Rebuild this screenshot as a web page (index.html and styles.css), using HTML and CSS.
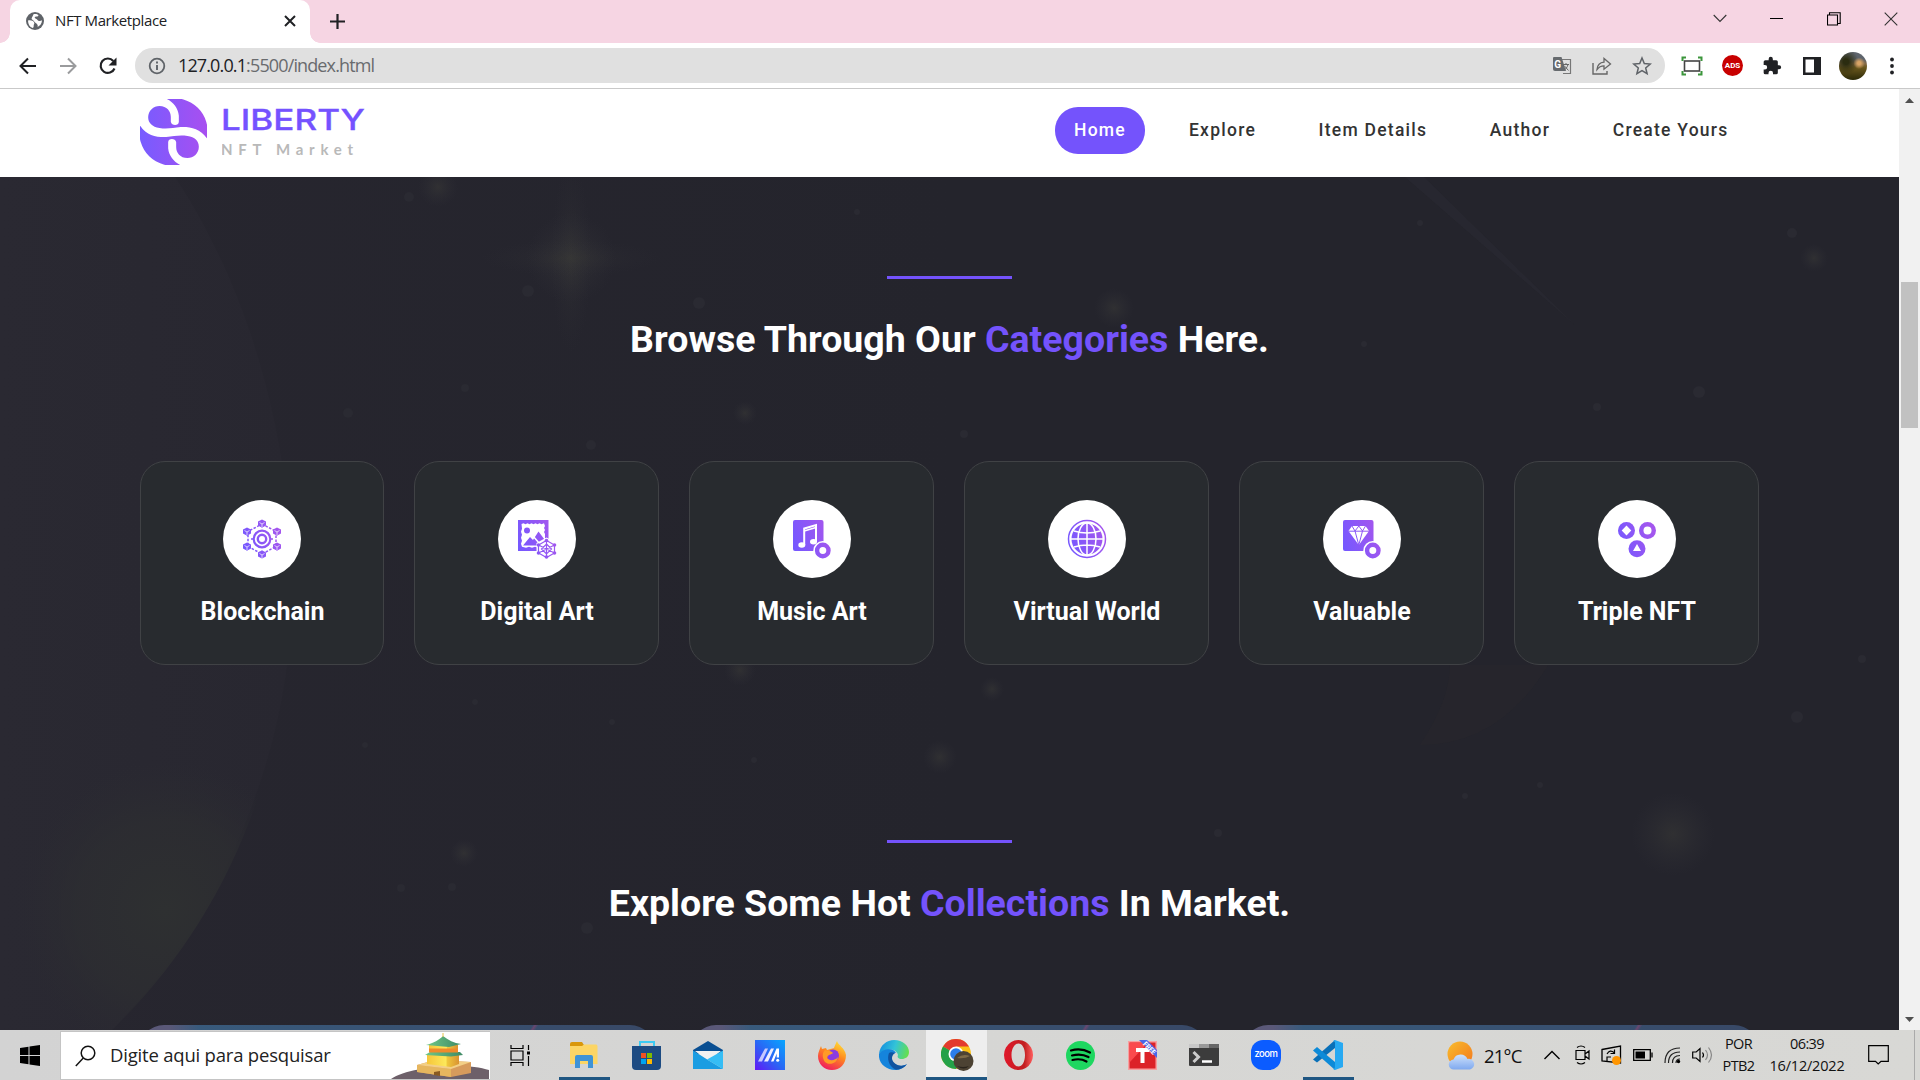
FILE: index.html
```html
<!DOCTYPE html>
<html lang="pt-BR">
<head>
<meta charset="utf-8">
<title>NFT Marketplace</title>
<link rel="stylesheet" href="styles.css">
</head>
<body>
<div class="screen">
  <div class="tabstrip">
    <div class="tab">
      <svg class="favicon" width="18" height="18" viewBox="0 0 18 18"><circle cx="9" cy="9" r="9" fill="#5f6368"/><path d="M2 8.500c3-.5 5 .2 6 1.800 1 1.500-.5 2-.3 3.400.1 1.100-.4 2-1 2.300C3.500 15 2 12 2 8.500zM7.500 2.200c2-.6 4 0 5 .8-.2 1.600-1.700 1.500-3.200 1.800-1 .2-.6 1.700.6 1.900 1.500.2 1.700 2.200 3.400 2.300 1.200 0 2-.7 2.700-.5-.1 3-1.900 5.300-4.400 6.400.6-1.700-.3-3.200-1.900-4-1.700-1-2-2.700-3.600-3.300C5 7 6 5.500 6.500 4.500z" fill="#fff"/></svg>
      <span class="tab-title">NFT Marketplace</span>
      <svg class="tab-close" width="12" height="12" viewBox="0 0 12 12"><path d="M1 1l10 10M11 1L1 11" stroke="#202124" stroke-width="2"/></svg>
    </div>
    <svg class="newtab" width="15" height="15" viewBox="0 0 15 15"><path d="M7.500 0v15M0 7.500h15" stroke="#202124" stroke-width="2.200"/></svg>
    <div class="winbtns">
      <svg width="14" height="9" viewBox="0 0 14 9"><path d="M.7 1L7 7.500 13.300 1" fill="none" stroke="#333" stroke-width="1.100"/></svg>
      <svg width="14" height="9" viewBox="0 0 14 9"><path d="M0 4.500h13" stroke="#000"/></svg>
      <svg width="14" height="14" viewBox="0 0 14 14"><path d="M.5 3h10v10H.5zM2.500 3V.8h10.700v10.700H11" fill="none" stroke="#000" stroke-width="1.100"/></svg>
      <svg width="14" height="14" viewBox="0 0 14 14"><path d="M.7.700l12.600 12.600M13.300.7L.7 13.300" stroke="#333" stroke-width="1.100"/></svg>
    </div>
  </div>

  <div class="toolbar">
    <div class="navbtns">
      <svg width="20" height="20" viewBox="0 0 20 20"><path d="M18 10H3M10 2.500L2.500 10l7.500 7.500" fill="none" stroke="#202124" stroke-width="2"/></svg>
      <svg width="20" height="20" viewBox="0 0 20 20"><path d="M2 10h15M10 2.500l7.500 7.500-7.500 7.500" fill="none" stroke="#9a9b9d" stroke-width="2"/></svg>
      <svg width="20" height="20" viewBox="0 0 20 20"><path d="M16.500 12.500A7.200 7.200 0 1 1 15.300 5" fill="none" stroke="#202124" stroke-width="2.200"/><path d="M18.500 1.500v8h-8z" fill="#202124"/></svg>
    </div>
    <div class="address">
      <svg width="18" height="18" viewBox="0 0 18 18"><circle cx="9" cy="9" r="7.300" fill="none" stroke="#5f6368" stroke-width="1.800"/><path d="M9 8v5M9 4.600v2" stroke="#5f6368" stroke-width="1.900"/></svg>
      <span class="url">127.0.0.1<span class="url-rest">:5500/index.html</span></span>
      <div class="address-icons">
        <svg width="20" height="20" viewBox="0 0 20 20"><path d="M8 3.500h10.500v14H11" fill="none" stroke="#777" stroke-width="1.200"/><path d="M1.500 1h8l4.500 14H3a2 2 0 0 1-2-2V2z" fill="#666a6e"/><text class="translate-g" x="2.200" y="11.500" fill="#fff">G</text><path d="M11 8.500h6M14 7v1.500M16 8.500c-.7 3-2.500 4.500-3.500 5.500M12.500 10l4 4.500" stroke="#666" fill="none"/></svg>
        <svg width="20" height="20" viewBox="0 0 20 20"><path d="M1 7v11h14v-3" fill="none" stroke="#666" stroke-width="1.400"/><path d="M5 13.500c.5-5 3-7 7-7.300V2.500L18.500 8 12 13.200V9.800c-3 0-5 .9-7 3.700z" fill="none" stroke="#666" stroke-width="1.300"/></svg>
        <svg width="20" height="20" viewBox="0 0 20 20"><path d="M10 2l2.300 5.500 6 .5-4.600 3.900 1.400 5.800L10 14.600l-5.100 3.100 1.400-5.800L1.700 8l6-.5z" fill="none" stroke="#5f6368" stroke-width="1.500"/></svg>
      </div>
    </div>
    <div class="exts">
      <svg width="22" height="20" viewBox="0 0 22 20"><path d="M1.500 5V1.500H5M17 1.500h3.500V5M20.500 15v3.500H17M5 18.500H1.500V15" fill="none" stroke="#3c963c" stroke-width="2"/><rect x="3.500" y="5" width="15" height="10" fill="#fff" stroke="#444" stroke-width="1.600"/></svg>
      <span class="ads">ADS</span>
      <svg width="20" height="20" viewBox="0 0 24 24"><path d="M20.500 11H19V7a2 2 0 0 0-2-2h-4V3.500a2.500 2.500 0 0 0-5 0V5H4a2 2 0 0 0-2 2v3.800h1.500a2.700 2.700 0 0 1 0 5.400H2V20a2 2 0 0 0 2 2h3.800v-1.500a2.700 2.700 0 0 1 5.400 0V22H17a2 2 0 0 0 2-2v-4h1.500a2.500 2.500 0 0 0 0-5z" fill="#202124"/></svg>
      <svg width="18" height="18" viewBox="0 0 18 18"><path d="M0 0h18v18H0zM2.500 2.500v13h8.500v-13z" fill="#202124" fill-rule="evenodd"/></svg>
      <span class="avatar"></span>
      <svg width="6" height="18" viewBox="0 0 6 18"><circle cx="3" cy="2.500" r="1.900" fill="#202124"/><circle cx="3" cy="9" r="1.900" fill="#202124"/><circle cx="3" cy="15.500" r="1.900" fill="#202124"/></svg>
    </div>
  </div>

  <div class="viewport">
    <div class="page">
      <header class="header">
        <div class="logo">
          <svg width="67" height="66" viewBox="0 0 200 198">
            <defs>
              <linearGradient id="lg" gradientUnits="userSpaceOnUse" x1="0" y1="0" x2="200" y2="0"><stop offset="0" stop-color="#775cff"/><stop offset="1" stop-color="#a84ff0"/></linearGradient>
              <linearGradient id="lg2" gradientUnits="userSpaceOnUse" x1="200" y1="0" x2="0" y2="0"><stop offset="0" stop-color="#775cff"/><stop offset="1" stop-color="#a84ff0"/></linearGradient>
            </defs>
            <path fill="url(#lg)" d="M80 0A100 99 0 0 1 200 118C180 88 150 83 122 84C98 86 82 91 58 87C36 84 24 72 24 55C24 35 40 21 58 21C80 21 92 36 92 54L92 68C94 81 116 81 116 68L116 50C114 28 100 10 80 0Z"/>
            <path fill="url(#lg2)" transform="rotate(180 100 99)" d="M80 0A100 99 0 0 1 200 118C180 88 150 83 122 84C98 86 82 91 58 87C36 84 24 72 24 55C24 35 40 21 58 21C80 21 92 36 92 54L92 68C94 81 116 81 116 68L116 50C114 28 100 10 80 0Z"/>
          </svg>
          <svg class="wordmark" width="146" height="66" viewBox="0 0 146 66">
            <text class="wm-name" x="-1" y="31" textLength="144" lengthAdjust="spacingAndGlyphs">LIBERTY</text>
            <text class="wm-sub" x="-1" y="56" textLength="132" lengthAdjust="spacing">NFT Market</text>
          </svg>
        </div>
        <nav class="nav">
          <a class="nav-link active">Home</a>
          <a class="nav-link">Explore</a>
          <a class="nav-link">Item Details</a>
          <a class="nav-link">Author</a>
          <a class="nav-link">Create Yours</a>
        </nav>
      </header>

      <main class="main">
        <svg class="space" width="1899" height="853" viewBox="0 177 1899 853" aria-hidden="true">
          <defs>
            <radialGradient id="glow"><stop offset="0" stop-color="#3c3c38" stop-opacity=".5"/><stop offset="1" stop-color="#32323a" stop-opacity="0"/></radialGradient>
            <linearGradient id="planet" x1="0" y1="0" x2="1" y2="0"><stop offset="0" stop-color="#2a2932"/><stop offset="1" stop-color="#282730"/></linearGradient>
            <linearGradient id="halo" x1="0" y1="0" x2="1" y2="0"><stop offset="0" stop-color="#27262f"/><stop offset="1" stop-color="#24242c"/></linearGradient>
            <radialGradient id="moss" gradientUnits="userSpaceOnUse" cx="165" cy="910" r="150"><stop offset="0" stop-color="#2e3031"/><stop offset=".6" stop-color="#2d2e31" stop-opacity=".7"/><stop offset="1" stop-color="#2b2b32" stop-opacity="0"/></radialGradient>
          </defs>
          <rect x="0" y="177" width="950" height="853" fill="url(#halo)"/>
          <path d="M0 177H175C250 290 292 440 292 590C292 760 215 925 112 1030H0Z" fill="url(#planet)"/>
          <path d="M0 650H288C275 810 205 940 112 1030H0Z" fill="url(#moss)"/>
          <path d="M1405 177L1424 177L1575 325Z" fill="#2a2a32" opacity=".7"/>
          <path d="M1548 665Q1500 745 1420 745Q1450 700 1450 665Z" fill="#2a272c" opacity=".45"/>
          <g fill="url(#glow)">
            <ellipse cx="571" cy="258" rx="45" ry="45"/><ellipse cx="571" cy="258" rx="20" ry="95" opacity=".6"/><ellipse cx="571" cy="258" rx="90" ry="18" opacity=".5"/>
            <circle cx="1673" cy="834" r="42"/><circle cx="438" cy="187" r="20"/><circle cx="1114" cy="308" r="20"/><circle cx="940" cy="757" r="17"/><circle cx="1814" cy="258" r="14"/><circle cx="740" cy="670" r="16"/><circle cx="992" cy="689" r="12"/><circle cx="464" cy="853" r="14"/><circle cx="745" cy="413" r="12"/>
          </g>
          <g fill="#2a2a32">
            <circle cx="528" cy="291" r="6"/><circle cx="699" cy="303" r="6"/><circle cx="409" cy="197" r="5"/><circle cx="591" cy="445" r="5"/><circle cx="348" cy="413" r="5"/><circle cx="465" cy="388" r="4"/><circle cx="1699" cy="392" r="6"/><circle cx="1797" cy="717" r="6"/><circle cx="1792" cy="233" r="5"/><circle cx="587" cy="928" r="6"/><circle cx="475" cy="702" r="3"/><circle cx="365" cy="745" r="3"/><circle cx="612" cy="722" r="3"/><circle cx="754" cy="760" r="3"/><circle cx="1465" cy="796" r="3"/><circle cx="1540" cy="785" r="3"/><circle cx="1218" cy="833" r="4"/><circle cx="401" cy="888" r="4"/><circle cx="452" cy="887" r="4"/><circle cx="857" cy="212" r="3"/><circle cx="1364" cy="344" r="3"/><circle cx="1420" cy="223" r="3"/><circle cx="1862" cy="659" r="4"/><circle cx="964" cy="434" r="4"/><circle cx="1597" cy="407" r="4"/>
          </g>
        </svg>

        <section class="section categories">
          <div class="line-dec"></div>
          <h2 class="title">Browse Through Our <em>Categories</em> Here.</h2>
          <div class="cat-grid">
            <article class="cat"><span class="cat-icon">
              <svg width="40" height="40" viewBox="0 0 40 40"><defs><linearGradient id="g" gradientUnits="userSpaceOnUse" x1="0" y1="24" x2="36" y2="12"><stop offset="0" stop-color="#7558ff"/><stop offset="1" stop-color="#a356ee"/></linearGradient></defs>
              <g fill="none" stroke="url(#g)"><circle cx="20" cy="20" r="8.300" stroke-width="2.200"/><circle cx="20" cy="20" r="4.200" stroke-width="2.400"/><path d="M20 5L34 12.500V27.500L20 35L6 27.500V12.500Z" stroke-width="1.500" stroke-dasharray="2.500 1.500"/><path d="M9 20h2M29 20h2" stroke-width="1.500"/></g>
              <g fill="url(#g)"><path d="M20 .5l4 2v4l-4 2.300-4-2.300v-4zM20 31.200l4 2.300v4l-4 2-4-2v-4zM5 8.500l4 2v4l-4 2.300-4-2.300v-4zM35 8.500l4 2v4l-4 2.300-4-2.300v-4zM5 23.500l4 2v4l-4 2.300-4-2.300v-4zM35 23.500l4 2v4l-4 2.300-4-2.300v-4z"/></g>
              <path d="M17.500 3.500L20 5l2.500-1.500M20 5v3M17.500 34.500L20 36l2.500-1.500M20 36v3M2.500 11.500L5 13l2.500-1.500M5 13v3M32.500 11.500L35 13l2.500-1.500M35 13v3M2.500 26.500L5 28l2.500-1.500M5 28v3M32.500 26.500L35 28l2.500-1.500M35 28v3" fill="none" stroke="#fff" stroke-width=".7"/></svg></span><h4>Blockchain</h4></article>
            <article class="cat"><span class="cat-icon">
              <svg width="40" height="40" viewBox="0 0 40 40"><path d="M1 1h30.500v31H1z" fill="url(#g)"/><path d="M4.500 5l2-.8 2 1 2-1 2 1 2-1 2 1 2-1 2 1 2-1 2 1 2.500-1L28 7l-1 2 1 2-1 2 1 2v13l-2 .8-3-1-2 1-3-1-3 1-3-1-3 1-4-1-1-3 1-3-1-3 1-3-1-3 1-3z" fill="#fff"/><circle cx="10" cy="11.500" r="3" fill="url(#g)"/><path d="M6 26.500l7-8.500 3 3 5.500-8.500 6 8-3 6z" fill="url(#g)"/><path d="M16 17l6 7" stroke="#fff" stroke-width="1.500"/><path d="M29.500 18.500l10 5.500v11l-10 5.500-10-5.500V24z" fill="#fff"/><g fill="none" stroke="url(#g)" stroke-width="1.200"><path d="M29.500 21.500l8 4.500v8l-8 4.500-8-4.500v-8zM29.500 25l5 5-5 5-5-5zM29.500 21.500v17M21.500 26l16 8M37.500 26l-16 8"/></g><g fill="url(#g)"><circle cx="29.500" cy="21.500" r="1.800"/><circle cx="29.500" cy="38" r="1.800"/><circle cx="21.500" cy="26" r="1.800"/><circle cx="37.500" cy="26" r="1.800"/><circle cx="21.500" cy="34" r="1.800"/><circle cx="37.500" cy="34" r="1.800"/></g></svg></span><h4>Digital Art</h4></article>
            <article class="cat"><span class="cat-icon">
              <svg width="40" height="40" viewBox="0 0 40 40"><rect x="1" y="1" width="30.500" height="31" rx="2" fill="url(#g)"/><path d="M12.200 26V9.500L24 6v17" fill="none" stroke="#fff" stroke-width="2"/><path d="M12.200 12L24 8.500" stroke="#fff" stroke-width="1.500"/><ellipse cx="9.800" cy="26" rx="3.500" ry="2.800" fill="#fff"/><ellipse cx="21.500" cy="22.800" rx="3.500" ry="2.700" fill="#fff"/><circle cx="30.800" cy="31.500" r="9.500" fill="#fff"/><circle cx="30.800" cy="31.500" r="5.700" fill="none" stroke="url(#g)" stroke-width="4.400"/></svg></span><h4>Music Art</h4></article>
            <article class="cat"><span class="cat-icon">
              <svg width="40" height="40" viewBox="0 0 40 40"><circle cx="20" cy="20" r="18.500" fill="none" stroke="url(#g)" stroke-width="1.500"/><circle cx="20" cy="20" r="15.500" fill="url(#g)"/><g fill="none" stroke="#fff" stroke-width="1.500"><path d="M20 4v32M4 20h32M7 12q13 4 26 0M7 28q13-4 26 0"/><ellipse cx="20" cy="20" rx="9" ry="16"/></g></svg></span><h4>Virtual World</h4></article>
            <article class="cat"><span class="cat-icon">
              <svg width="40" height="40" viewBox="0 0 40 40"><rect x="1" y="1" width="30.500" height="31" rx="2" fill="url(#g)"/><path d="M10 7h13.500l3.500 5-10.200 14L6.500 12z" fill="#fff"/><path d="M6.500 12.200H27M13 12l3.800 14L20.500 12M10 7l3 5 3.800-5 3.700 5 3-5" fill="none" stroke="url(#g)"/><circle cx="30.800" cy="31.500" r="9.500" fill="#fff"/><circle cx="30.800" cy="31.500" r="5.700" fill="none" stroke="url(#g)" stroke-width="4.400"/></svg></span><h4>Valuable</h4></article>
            <article class="cat"><span class="cat-icon">
              <svg width="40" height="40" viewBox="0 0 40 40"><g fill="url(#g)"><circle cx="9.500" cy="11.500" r="8.500"/><circle cx="30.500" cy="11.500" r="8.500"/><circle cx="20" cy="29.800" r="8.500"/></g><path d="M9.500 6.500l4.800 5-4.800 5-4.800-5zM20 25l4 7h-8z" fill="#fff"/><circle cx="30.500" cy="11.500" r="4" fill="#fff"/></svg></span><h4>Triple NFT</h4></article>
          </div>
        </section>

        <section class="section collections">
          <div class="line-dec"></div>
          <h2 class="title">Explore Some Hot <em>Collections</em> In Market.</h2>
          <div class="col-grid"><div class="col-card"></div><div class="col-card"></div><div class="col-card"></div></div>
        </section>
      </main>
    </div>
    <div class="scrollbar">
      <svg width="9" height="5" viewBox="0 0 9 5"><path d="M0 5L4.500 0 9 5z" fill="#505050"/></svg>
      <div class="track"><div class="thumb"></div></div>
      <svg width="9" height="5" viewBox="0 0 9 5"><path d="M0 0l4.500 5L9 0z" fill="#505050"/></svg>
    </div>
  </div>

  <div class="taskbar">
    <div class="start"><svg width="20" height="21" viewBox="0 0 20 21"><path d="M0 3l8.500-1.200V10H0zM9.500 1.600L20 0v10H9.500zM0 11h8.500v8.200L0 18zM9.500 11H20v10L9.500 19.400z"/></svg></div>
    <div class="search">
      <svg width="21" height="22" viewBox="0 0 21 22"><circle cx="13" cy="8" r="6.800" fill="none" stroke="#111" stroke-width="1.500"/><path d="M8.300 13L.8 21" stroke="#111" stroke-width="1.500"/></svg>
      <span class="search-text">Digite aqui para pesquisar</span>
      <svg class="temple" width="98" height="47" viewBox="0 0 98 47">
        <defs><linearGradient id="tg" x1="0" x2="1"><stop offset="0" stop-color="#f6c63a"/><stop offset=".6" stop-color="#fde95b"/><stop offset=".62" stop-color="#f0c93c"/><stop offset="1" stop-color="#d99332"/></linearGradient><linearGradient id="gg" x1="0" x2="1"><stop offset="0" stop-color="#6fc888"/><stop offset="1" stop-color="#3f8a65"/></linearGradient></defs>
        <path d="M0 47C18 34 75 30 98 38V47z" fill="#6d6069"/><path d="M26 33l18-5 36 2v11l-20 4-34-5z" fill="#d79b5c"/><path d="M26 33l34 4v8l-34-5z" fill="#e6b65e"/><path d="M26 33l18-5 36 2-20 7z" fill="#f3cf86"/>
        <path d="M36 23h32v9l-8 3-24-3z" fill="url(#tg)"/><path d="M34 23l5-3h30l3 3-12 1.500z" fill="url(#gg)"/><path d="M38 13h29v7.500H38z" fill="#ef8a2b"/><path d="M38 13h29v3.500H38z" fill="url(#tg)"/><path d="M35 13c8-2 13-5 17-9 5 4 11 7 18 8l-12 3z" fill="url(#gg)"/><path d="M52 1v4" stroke="#e8c34a"/><path d="M43 43v-3l6-1v5z" fill="#8a5a20"/></svg>
    </div>
    <div class="taskview"><svg width="20" height="21" viewBox="0 0 20 21"><path d="M1 0v3.500h12V0M1 21v-3.500h12V21M1 6h12v9H1zM18.500 0v5M18.500 11v10" fill="none" stroke="#000" stroke-width="1.200"/><path d="M17 6.500h3v3h-3z"/></svg></div>
    <div class="apps">
      <div class="app running"><svg width="28" height="26" viewBox="0 0 28 26"><path d="M0 2q0-2 2-2h10l2 3v4H0z" fill="#d9970b"/><path d="M0 4h12l2-1.500h12q1.500 0 1.500 2V22H0z" fill="#fcd565"/><path d="M5 26V15q0-2 2-2h14q2 0 2 2v11h-5v-7h-8v7z" fill="#3f93d6"/></svg></div>
      <div class="app"><svg width="29" height="29" viewBox="0 0 29 29"><path d="M8 8V1h14v7" fill="none" stroke="#3ccbf4" stroke-width="2"/><path d="M0 5h29v20q0 4-4 4H4q-4 0-4-4z" fill="#1d4b82"/><path d="M9 12h5v5H9z" fill="#f25022"/><path d="M15 12h5v5h-5z" fill="#7fba00"/><path d="M9 18h5v5H9z" fill="#00a4ef"/><path d="M15 18h5v5h-5z" fill="#ffb900"/></svg></div>
      <div class="app"><svg width="30" height="28" viewBox="0 0 30 28"><path d="M0 9L15 0l15 9v4H0z" fill="#0a4f92"/><path d="M2 10h26L15 20z" fill="#f1f1f1"/><path d="M0 9.500l15 9.500 15 9H0z" fill="#1b9de2"/><path d="M30 9.500L14 18.500 30 28z" fill="#35bdf5"/></svg></div>
      <div class="app"><svg width="30" height="30" viewBox="0 0 30 30"><defs><linearGradient id="ma" x1="0" y1="1" x2="1" y2="0"><stop offset="0" stop-color="#6317f5"/><stop offset=".5" stop-color="#2869f5"/><stop offset="1" stop-color="#06a7ff"/></linearGradient></defs><path d="M0 0h30v30H0z" fill="url(#ma)"/><path d="M3 21.500L10 8.500h3L7 21.500z" fill="#c5c8ff"/><path d="M9 21.500l7-13h3l-6 13z" fill="#eef"/><path d="M16 21.500l5.500-13H24v9h-2.300v-4l-3.200 8z" fill="#fff"/><circle cx="22.700" cy="20.300" r="1.500" fill="#fff"/></svg></div>
      <div class="app"><svg width="28" height="29" viewBox="0 0 28 29"><defs><linearGradient id="ff" x1=".8" y1="0" x2=".3" y2="1"><stop offset="0" stop-color="#ffe33b"/><stop offset=".45" stop-color="#ff8a1e"/><stop offset="1" stop-color="#f0195f"/></linearGradient></defs><path d="M3 5l1 3 4-1 1 2c2-1 5-1 7-2 1-3 2-5 3-7 1 4 8 7 9 14C28 23 22 29 14 29S0 23 0 15C0 11 2 8 3 5z" fill="url(#ff)"/><circle cx="15" cy="14.500" r="6" fill="#8a3be0"/><path d="M7 9c3 1 5 0 8 3-2 2-5 1-6 5 2 3 8 3 11-1-1 6-8 9-13 5-3-4-3-9 0-12z" fill="#ff9a26"/></svg></div>
      <div class="app"><svg width="30" height="30" viewBox="0 0 30 30"><defs><linearGradient id="ed" x1="0" y1=".4" x2="1" y2=".6"><stop offset="0" stop-color="#1490df"/><stop offset=".5" stop-color="#33c3d8"/><stop offset="1" stop-color="#66e04b"/></linearGradient></defs><path d="M0 14C1 5 8 0 15 0c9 0 15 6 15 12 0 5-4 7-7 7-4 0-5-2-4-4-1-4-5-6-9-5-5 0-8 2-10 4z" fill="url(#ed)"/><path d="M0 14c3-5 14-7 17-1-5 0-6 8-1 11 4 3 9 2 12 0-3 4-7 6-12 6C7 30-1 23 0 14z" fill="#1584dc"/><path d="M10 13c-2 5-1 13 7 16.800 5-.3 9-2.800 11-5.800-3 2-8 2.500-12-.5-4-3-4-8 0-10.500-2-1-5-1-6 0z" fill="#1053a0"/></svg></div>
      <div class="app current"><svg width="33" height="33" viewBox="0 0 33 33"><circle cx="15" cy="15" r="15" fill="#fbc116"/><path d="M15 15L2 7.500A15 15 0 0 1 28 7.500H15z" fill="#e33b2e"/><path d="M15 15L2 7.500A15 15 0 0 0 15 30l6.500-11.300z" fill="#24a148"/><circle cx="15" cy="15" r="7.500" fill="#fff"/><circle cx="15" cy="15" r="5.800" fill="#2b7de9"/><circle cx="22.500" cy="22" r="10" fill="#4c4233"/><path d="M16 19q6-5 13-2-5 3-13 2z" fill="#7d6a48"/><path d="M16 27q6 2 12 0-5 5-12 0z" fill="#2a241c"/></svg></div>
      <div class="app"><svg width="29" height="30" viewBox="0 0 29 30"><defs><linearGradient id="op" x1="0" x2="1"><stop offset="0" stop-color="#e0182a"/><stop offset=".7" stop-color="#c11e20"/><stop offset="1" stop-color="#ff6060"/></linearGradient></defs><path d="M14.500 0a14.500 15 0 1 0 .01 0zM14.500 3.500C18 3.500 21 8 21 15s-3 11.500-6.500 11.500S7.500 22 7.500 15 11 3.500 14.500 3.500z" fill="url(#op)" fill-rule="evenodd"/></svg></div>
      <div class="app"><svg width="29" height="29" viewBox="0 0 29 29"><circle cx="14.500" cy="14.500" r="14.500" fill="#1ed760"/><path d="M5 9.500q10-3 19 2M6 14.500q9-2.500 16.500 1.500M6.500 19q8-2 14 1.500" fill="none" stroke="#000" stroke-width="2.200" stroke-linecap="round"/></svg></div>
      <div class="app"><svg width="29" height="30" viewBox="0 0 29 30"><path d="M0 1h29v29H0z" fill="#f7a0a0"/><path d="M1.500 2.500h26v26h-26z" fill="#dc2228"/><path d="M1.500 2.500H20l-18.500 20z" fill="#fa4a4d"/><path d="M8 8h13v4h-4.500v11h-4V12H8z" fill="#fff"/><path d="M11 0h8l10 10v8z" fill="#4a66ea"/><text class="free" transform="translate(14.500 4.500) rotate(45)" textLength="15" lengthAdjust="spacingAndGlyphs">FREE</text></svg></div>
      <div class="app"><svg width="30" height="22" viewBox="0 0 30 22"><rect width="30" height="22" rx="1" fill="#3c3c3c"/><path d="M0 0h10v4H0z" fill="#c8c8c8"/><path d="M10 0h10v4H10z" fill="#999"/><path d="M20 0h10v4H20z" fill="#666"/><path d="M4.500 8l5 5-5 5" fill="none" stroke="#ccc" stroke-width="3"/><path d="M13 17.500h10" stroke="#fff" stroke-width="2.500"/></svg></div>
      <div class="app"><span class="zoom-app">zoom</span></div>
      <div class="app running"><svg width="30" height="30" viewBox="0 0 30 30"><path d="M22 0v8L4 22.500 0 19.500z" fill="#0a70b8"/><path d="M0 10.500L4 7l18 15v8z" fill="#0c8ad8"/><path d="M22 0l8 3v24l-8 3-2-1c1.500 0 2-1 2-2V3c0-1-.5-2-2-2z" fill="#27a9f2"/></svg></div>
    </div>
    <div class="tray">
      <svg class="weather" width="28" height="29" viewBox="0 0 28 29"><defs><linearGradient id="sun" x1="0" y1="0" x2="1" y2="1"><stop offset="0" stop-color="#f9bd2c"/><stop offset="1" stop-color="#f3761d"/></linearGradient><linearGradient id="cl" x1="0" y1="0" x2="0" y2="1"><stop offset="0" stop-color="#cfe2fc"/><stop offset="1" stop-color="#7fa9ef"/></linearGradient></defs><circle cx="13" cy="13" r="12.500" fill="url(#sun)"/><path d="M7 28.500a5 5 0 0 1-.5-10A7.500 7.500 0 0 1 20.500 18a5 5 0 0 1 2.500 10.500z" fill="url(#cl)"/></svg>
      <span class="temp">21°C</span>
      <div class="tray-icons">
        <svg class="chevron" width="16" height="10" viewBox="0 0 16 10"><path d="M.5 9L8 1.500 15.500 9" fill="none" stroke="#000" stroke-width="1.400"/></svg>
        <svg width="15" height="20" viewBox="0 0 15 20"><path d="M1 5.500h9v9H1zM10 9l4-3v8l-4-3M2 2.500q4-3 8 0M2 17.500q4 3 8 0" fill="none" stroke="#000" stroke-width="1.200"/></svg>
        <svg width="21" height="20" viewBox="0 0 21 20"><path d="M1 4.500L19.500 1v17L1 16z" fill="none" stroke="#000" stroke-width="1.300"/><path d="M6 9q3-5 7-1.500M13.500 4.500v4h-4M6 16v-4h4" fill="none" stroke="#000" stroke-width="1.200"/><circle cx="15.500" cy="15.500" r="4.500" fill="#ff9500"/></svg>
        <svg width="20" height="12" viewBox="0 0 20 12"><path d="M.7.700h16.600v10.600H.7zM19 3.500v5" fill="none" stroke="#000" stroke-width="1.300"/><path d="M2.500 2.500H12v7H2.500z"/></svg>
        <svg width="17" height="17" viewBox="0 0 17 17"><path d="M1 16Q1 1 16 1M4.500 16Q4.500 5 16 5M8.500 16Q8.500 8.500 16 8.500M12 16q0-4 4-4" fill="none" stroke="#222" stroke-width="1.200"/><circle cx="14.500" cy="14.500" r="1.700"/></svg>
        <svg width="21" height="18" viewBox="0 0 21 18"><path d="M.7 6h3.500L8 2.500v13L4.200 12H.7z" fill="none" stroke="#000" stroke-width="1.200"/><path d="M10.500 6.500q2 2.500 0 5" fill="none" stroke="#000" stroke-width="1.200"/><path d="M13.500 4q4 5 0 10M16.500 1.500q6 7.500 0 15" fill="none" stroke="#888" stroke-width="1.200"/></svg>
      </div>
      <div class="lang"><span>POR</span><span>PTB2</span></div>
      <div class="clock"><span class="time">06:39</span><span class="date">16/12/2022</span></div>
      <svg class="notif" width="21" height="20" viewBox="0 0 21 20"><path d="M.7.700h19.600v15.600H13L10.200 19 7.500 16.300H.7z" fill="none" stroke="#000" stroke-width="1.200"/></svg>
    </div>
  </div>
</div>
</body>
</html>
```
FILE: styles.css
```css
* { box-sizing: border-box; }
body { margin: 0; overflow: hidden; font-family: Roboto, "Liberation Sans", sans-serif; }
svg { display: block; flex: none; }
.screen { width: 1920px; height: 1080px; display: flex; flex-direction: column; }

/* Browser chrome */
.tabstrip { height: 43px; flex: none; background: #f6d5e3; display: flex; padding-left: 10px; }
.tab { width: 300px; height: 43px; background: #fff; border-radius: 10px 10px 0 0; display: flex; align-items: center; padding: 0 14px 2px 16px; position: relative; }
.tab::before, .tab::after { content: ""; position: absolute; bottom: 0; width: 10px; height: 10px; }
.tab::before { left: -10px; background: radial-gradient(circle at 0 0, #f6d5e3 9.500px, #fff 10px); }
.tab::after { right: -10px; background: radial-gradient(circle at 100% 0, #f6d5e3 9.500px, #fff 10px); }
.tab-title { font: 15px/20px "Open Sans", "Noto Sans", sans-serif; letter-spacing: -0.4px; color: #202124; margin: -1px 0 0 11px; flex: 1; white-space: nowrap; }
.newtab { margin: 14px 0 0 20px; }
.winbtns { margin-left: auto; display: flex; align-items: center; gap: 43px; height: 37px; padding-right: 22px; }
.toolbar { height: 46px; flex: none; background: #fff; border-bottom: 1px solid #c9c9c9; display: flex; align-items: center; }
.navbtns { width: 135px; display: flex; gap: 20px; padding-left: 18px; }
.address { width: 1530px; height: 35px; border-radius: 18px; background: #e0e0e0; display: flex; align-items: center; padding: 0 13px 0 13px; }
.url { font: 18px/24px "Open Sans", "Noto Sans", sans-serif; letter-spacing: -0.87px; color: #202124; margin-left: 12px; padding-bottom: 1px; }
.url-rest { color: #696b6e; }
.address-icons { margin-left: auto; display: flex; gap: 20px; }
.translate-g { font: bold 10px Roboto, sans-serif; }
.exts { display: flex; align-items: center; padding-left: 16px; }
.ads { width: 21px; height: 21px; margin: 0 19px 0 19px; border-radius: 50%; background: #c80000; color: #fff; font: bold 8px/21px Roboto, sans-serif; text-align: center; }
.exts svg + svg { margin-left: 21px; }
.avatar { width: 28px; height: 28px; margin: 0 22px 0 18px; border-radius: 50%; background: radial-gradient(circle at 72% 40%, #d9a465 0 6%, transparent 22%), radial-gradient(circle at 25% 35%, #2b2c10 10%, transparent 45%), linear-gradient(#5e646c 0 25%, #846a48 42%, #6a571c 56%, #2b2908 100%); }

/* Site */
.viewport { flex: 1; min-height: 0; display: flex; }
.page { width: 1899px; display: flex; flex-direction: column; overflow: hidden; }
.header { height: 88px; flex: none; background: #fff; display: flex; justify-content: space-between; align-items: flex-start; padding: 0 152.500px 0 140px; }
.logo { display: flex; gap: 15px; padding-top: 10px; }
.wm-name { font: 500 29px Inter, sans-serif; fill: #7552ff; stroke: #7552ff; stroke-width: .3px; }
.wm-sub { font: bold 15px Lato, sans-serif; fill: #b9b9b9; }
.nav { display: flex; gap: 25.500px; padding-top: 18px; }
.nav-link { height: 47px; padding: 0 18px 0 19px; border-radius: 23px; font-size: 17.500px; font-weight: 500; line-height: 46px; letter-spacing: 1.250px; color: #333; white-space: nowrap; }
.nav-link.active { padding-right: 19px; margin-right: -0.5px; background: #7453fc; color: #fff; }
.main { flex: 1; min-height: 0; background: #24242c; position: relative; overflow: hidden; }
.space { position: absolute; inset: 0; }
.section { position: relative; padding: 0 140px 0 139px; }
.categories { height: 564px; padding-top: 99px; }
.collections { padding-top: 99px; }
.line-dec { width: 125px; height: 3px; margin: 0 auto; background: #7453fc; }
.title { margin: 37.500px 0 0; padding-left: 1px; font-size: 37.500px; line-height: 45px; font-weight: 700; color: #fff; text-align: center; }
.title em { font-style: normal; color: #7453fc; }
.cat-grid { display: grid; grid-template-columns: repeat(6, 245px); gap: 30px; margin-top: 99.500px; }
.cat { height: 204px; border: 1px solid #404245; border-radius: 25px; background: #282b2f; display: flex; flex-direction: column; align-items: center; padding-top: 38px; }
.cat:first-child { margin-left: 1px; }
.cat-icon { width: 78px; height: 78px; border-radius: 50%; background: #fff; display: grid; place-items: center; }
.cat h4 { margin: 19px 0 0; padding-left: 1px; font-size: 25px; line-height: 30px; font-weight: 700; color: #fff; }
.col-grid { display: grid; grid-template-columns: repeat(3, 516px); gap: 36px; margin-top: 99.500px; }
.col-card { height: 500px; border-radius: 25px; background: linear-gradient(122deg, transparent 0 334px, #6b4770 336px, transparent 339px), linear-gradient(90deg, #5a5878 0 30px, #385a7c 60px, #384866 100%); }
.scrollbar { width: 21px; background: #f1f1f1; display: flex; flex-direction: column; align-items: center; padding: 9px 1px 8px 0; }
.track { flex: 1; padding-top: 179px; }
.thumb { width: 17px; height: 146px; background: #c1c1c1; }

/* Taskbar */
.taskbar { height: 50px; flex: none; display: flex; background: linear-gradient(90deg, #d3d3d3, #d6d6d4 50%, #d8d8d5); color: #111; font-family: "Open Sans", "Noto Sans", sans-serif; }
.start { width: 60px; display: grid; place-items: center; }
.search { width: 430px; height: 49px; margin-top: 1px; background: #fff; border: 1px solid #c4c4c4; border-right: 0; display: flex; align-items: center; padding: 0 1px 0 14px; }
.search-text { margin-left: 14px; flex: 1; font-size: 18.500px; line-height: 24px; padding-bottom: 2px; letter-spacing: -0.2px; color: #222; white-space: nowrap; }
.taskview { width: 63px; display: grid; place-items: center; padding-right: 3px; }
.apps { display: flex; }
.app { width: 62px; height: 50px; display: grid; place-items: center; }
.running { background: linear-gradient(#1f5682, #1f5682) 50% 100% / 51px 3px no-repeat; }
.current { width: 61px; margin-left: 1px; background: #eee; border-bottom: 3px solid #1f5682; padding: 3px 0 0 2px; }
.free { font: bold 7px Roboto, sans-serif; fill: #fff; }
.zoom-app { width: 30px; height: 30px; border-radius: 12px; background: #0b5cff; color: #fff; font: 500 9.500px/28px Inter, sans-serif; letter-spacing: -0.5px; text-align: center; }
.tray { flex: 1; display: flex; align-items: center; position: relative; margin-right: 5px; padding-left: 88px; border-right: 1px solid #aaa; }
.temp { font-size: 18.500px; letter-spacing: -0.8px; margin-left: 9px; width: 60px; }
.tray-icons { display: flex; align-items: center; gap: 11px; width: 166px; }
.chevron { margin-right: 4px; }
.lang, .clock { display: flex; flex-direction: column; align-items: center; font-size: 14.500px; line-height: 22px; letter-spacing: -0.6px; }
.lang { width: 57px; }
.clock { width: 80px; }
.date { letter-spacing: -0.2px; }
.notif { margin-left: 21px; }
```
